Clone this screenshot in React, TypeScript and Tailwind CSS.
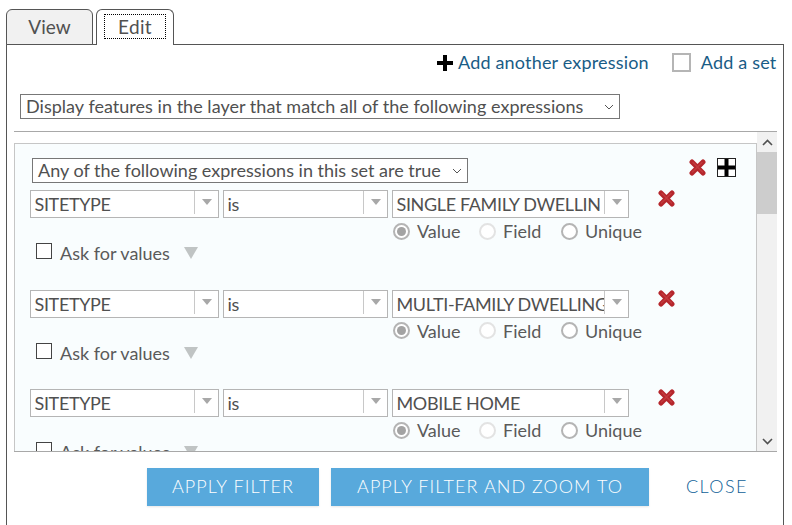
const font = "font-['Lato','Open_Sans',sans-serif]";

function Chevron() {
  return (
    <svg width="10" height="6" viewBox="0 0 10 6" className="shrink-0">
      <path d="M1 1l4 4 4-4" fill="none" stroke="#555" strokeWidth="1" />
    </svg>
  );
}

function RedX() {
  return (
    <svg width="17" height="17" viewBox="0 0 17 17">
      <path d="M3 3l11 11M14 3L3 14" fill="none" stroke="#b5262c" strokeWidth="5" strokeLinecap="round" />
      <path d="M4 3.500l9.500 9.500M13 3.500L3.500 13" fill="none" stroke="#c23a3e" strokeWidth="1.500" strokeLinecap="round" />
    </svg>
  );
}

function Combo({ text, w, textW }: { text: string; w: string; textW: string }) {
  return (
    <div className={`${w} flex h-[28px] shrink-0 items-center border border-[#b5b5b5] bg-white`}>
      <div className={`${textW} overflow-hidden whitespace-nowrap pl-[3.500px] pt-[1px] text-[18px] tracking-[-0.35px] text-[#505050]`}>{text}</div>
      <div className="flex h-full flex-1 items-center justify-center">
        <div className="h-[23px] w-px self-start bg-[#c8c8c8]" />
        <div className="mx-auto mb-[4px] h-0 w-0 border-x-[5px] border-t-[6px] border-x-transparent border-t-[#a8a8a8]" />
      </div>
    </div>
  );
}

function Radio({ label, state, w }: { label: string; state: "on" | "off" | "dim"; w: string }) {
  return (
    <div className={`${w} flex items-center gap-[7px]`}>
      <div className={`flex h-[17px] w-[17px] items-center justify-center rounded-full border-2 ${state === "dim" ? "border-[#e3e3e3]" : "border-[#b4b4b4]"} bg-white`}>
        {state === "on" && <div className="h-[9px] w-[9px] rounded-full bg-[#a3a3a3]" />}
      </div>
      <span className="text-[18px] leading-none text-[#5a5a5a]">{label}</span>
    </div>
  );
}

function Row({ value, h }: { value: string; h: string }) {
  return (
    <div className={`${h} shrink-0 pl-[15px]`}>
      <div className="flex gap-[4px]">
        <Combo text="SITETYPE" w="w-[189px]" textW="w-[163px]" />
        <Combo text="is" w="w-[165px]" textW="w-[139px]" />
        <Combo text={value} w="w-[237px]" textW="w-[211px]" />
        <div className="ml-[25px]">
          <RedX />
        </div>
      </div>
      <div className="ml-[363px] mt-[4px] flex h-[18px] items-center">
        <Radio label="Value" state="on" w="w-[86px]" />
        <Radio label="Field" state="dim" w="w-[82px]" />
        <Radio label="Unique" state="off" w="w-[90px]" />
      </div>
      <div className="ml-[6px] flex h-[22px] items-center">
        <div className="h-[16px] w-[16px] border border-[#444] bg-white" />
        <span className="ml-[8px] pt-[4px] text-[18px] leading-none text-[#5a5a5a]">Ask for values</span>
        <div className="ml-[14px] mt-[4px] h-0 w-0 border-x-[7px] border-t-[12px] border-x-transparent border-t-[#c0c4c4]" />
      </div>
    </div>
  );
}

export default function App() {
  return (
    <div className={`${font} h-[525px] w-[792px] overflow-hidden bg-white pl-[6px] pr-[8px] pt-[9px]`}>
      {/* tabs */}
      <div className="flex h-[36px] items-end">
        <div className="flex h-[36px] w-[87px] items-center justify-center rounded-t-[6px] border border-[#555] bg-[#f1f1f1] text-[19px] text-[#505050]">
          View
        </div>
        <div className="relative z-10 ml-[3px] flex h-[36px] w-[78px] items-center justify-center rounded-t-[6px] border border-b-0 border-[#555] bg-white text-[19px] tracking-[0.3px] text-[#505050]">
          <span className="mb-[2px] border border-dotted border-black px-[13px] leading-[23px]">Edit</span>
        </div>
      </div>
      {/* panel */}
      <div className="mt-[-1px] h-[500px] border border-[#555] bg-white">
        <div className="flex h-[35px] items-center">
          <svg width="16" height="16" viewBox="0 0 16 16" className="ml-[430px]">
            <path d="M6 0h4v6h6v4h-6v6H6v-6H0V6h6z" fill="#000" />
          </svg>
          <span className="ml-[5px] text-[18px] tracking-[0.18px] text-[#195c86]">Add another expression</span>
          <div className="ml-[23px] h-[19px] w-[19px] border-2 border-[#b5b5b5]" />
          <span className="ml-[10px] text-[18px] tracking-[0.18px] text-[#195c86]">Add a set</span>
        </div>
        <div className="ml-[13px] mt-[14px] flex h-[25px] w-[600px] items-center justify-between border border-[#777] px-[5px] text-[18px] tracking-[0.03px] text-[#505050]">
          <span>Display features in the layer that match all of the following expressions</span>
          <Chevron />
        </div>
        {/* filter list */}
        <div className="ml-[7px] mt-[12px] flex h-[321px] w-[763px] border-y border-[#a8a8a8]">
          <div className="min-w-0 flex-1 overflow-hidden pt-[11px]">
            <div className="h-[340px] border border-[#c6c6c6] bg-[#f9fdfe] pt-[14px]">
              <div className="flex h-[26px] items-start">
                <div className="ml-[17px] flex h-[25px] w-[436px] items-center justify-between border border-[#777] bg-white px-[5px] text-[18px] text-[#505050]">
                  <span>Any of the following expressions in this set are true</span>
                  <Chevron />
                </div>
                <div className="ml-[221px] mt-[1px]">
                  <RedX />
                </div>
                <svg width="19" height="19" viewBox="0 0 19 19" className="ml-[11px]">
                  <rect x="0.500" y="0.500" width="18" height="18" fill="#fff" stroke="#222" />
                  <path d="M7.500 1h4v6.500H18v4h-6.500V18h-4v-6.500H1v-4h6.500z" fill="#000" />
                </svg>
              </div>
              <div className="mt-[6px] flex flex-col">
                <Row value="SINGLE FAMILY DWELLIN" h="h-[99.500px]" />
                <Row value="MULTI-FAMILY DWELLING" h="h-[99.500px]" />
                <Row value="MOBILE HOME" h="h-[100px]" />
              </div>
            </div>
          </div>
          <div className="flex w-[20px] shrink-0 flex-col items-center bg-[#f1f1f1]">
            <div className="flex h-[20px] items-center justify-center">
              <svg width="11" height="7" viewBox="0 0 11 7">
                <path d="M1 6l4.500-4.500L10 6" fill="none" stroke="#505050" strokeWidth="1.600" />
              </svg>
            </div>
            <div className="h-[62px] w-full bg-[#cdcdcd]" />
            <div className="flex-1" />
            <div className="flex h-[20px] items-center justify-center">
              <svg width="11" height="7" viewBox="0 0 11 7">
                <path d="M1 1l4.500 4.500L10 1" fill="none" stroke="#505050" strokeWidth="1.600" />
              </svg>
            </div>
          </div>
        </div>
        {/* footer */}
        <div className="mt-[16px] flex items-center">
          <button className="ml-[140px] h-[38px] w-[172px] bg-[#58a9dc] pb-[2px] text-[18px] font-light tracking-[1.1px] text-white shadow-[0_1px_2px_rgba(0,0,0,0.1)]">
            APPLY FILTER
          </button>
          <button className="ml-[12px] h-[38px] w-[318px] bg-[#58a9dc] pb-[2px] text-[18px] font-light tracking-[1.050px] text-white shadow-[0_1px_2px_rgba(0,0,0,0.1)]">
            APPLY FILTER AND ZOOM TO
          </button>
          <span className="ml-[37px] pb-[2px] text-[18px] font-light tracking-[1.4px] text-[#0f5f98]">CLOSE</span>
        </div>
      </div>
    </div>
  );
}
